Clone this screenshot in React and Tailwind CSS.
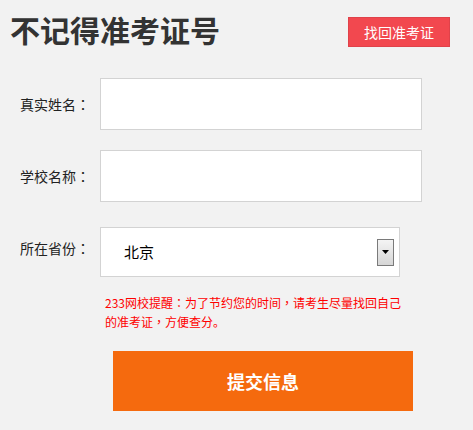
import React from 'react';

const FONT = { fontFamily: '"Microsoft YaHei", "Noto Sans CJK SC", "Noto Sans", sans-serif' };

// centred full-width punctuation, as in the reference
function P({ children }) {
  return <span className="[font-family:'Noto_Sans_CJK_TC',sans-serif]">{children}</span>;
}

function Field({ label, children, top }) {
  return (
    <div className={`flex items-center ${top}`}>
      <div className="w-[100px] pl-[20px] text-[14px] text-[#222]">{label}<P>：</P></div>
      {children}
    </div>
  );
}

export default function App() {
  return (
    <div className="w-[473px] h-[430px] bg-[#f2f2f2] overflow-hidden [text-spacing-trim:space-all]" style={FONT}>
      {/* Header */}
      <div className="flex items-start justify-between pl-[10px] pr-[23px] pt-[10px] h-[78px]">
        <h1 className="text-[30px] leading-[38px] font-bold text-[#333]">不记得准考证号</h1>
        <button className="mt-[7px] w-[102px] h-[30px] bg-[#f2484f] text-white text-[14px] border border-[#e0424a]">
          找回准考证
        </button>
      </div>

      {/* Form */}
      <Field label="真实姓名">
        <div className="w-[322px] h-[52px] bg-white border border-[#d3d3d3]" />
      </Field>
      <Field label="学校名称" top="mt-[20px]">
        <div className="w-[322px] h-[52px] bg-white border border-[#d3d3d3]" />
      </Field>
      <div className="flex items-start mt-[25px]">
        <div className="w-[100px] pl-[20px] text-[14px] text-[#222] pt-[11px]">所在省份<P>：</P></div>
        <div className="w-[300px] h-[50px] bg-white border border-[#d3d3d3] flex items-center justify-between pl-[23px] pr-[5px]">
          <span className="text-[15px] text-black">北京</span>
          <div className="w-[17px] h-[27px] border border-[#7a7a7a] bg-gradient-to-b from-[#f4f4f4] to-[#d6d6d6] flex items-center justify-center">
            <svg width="7" height="4" viewBox="0 0 7 4"><polygon points="0,0 7,0 3.5,4" fill="#000" /></svg>
          </div>
        </div>
      </div>

      {/* Tip */}
      <p className="ml-[105px] mt-[16px] w-[300px] text-[12px] leading-[19px] text-[#ff0000]">
        233网校提醒<P>：</P>为了节约您的时间<P>，</P>请考生尽量找回自己的准考证<P>，</P>方便查分。
      </p>

      {/* Submit */}
      <button className="ml-[113px] mt-[20px] w-[300px] h-[60px] bg-[#f56a0e] text-white text-[18px] font-bold">
        提交信息
      </button>
    </div>
  );
}
